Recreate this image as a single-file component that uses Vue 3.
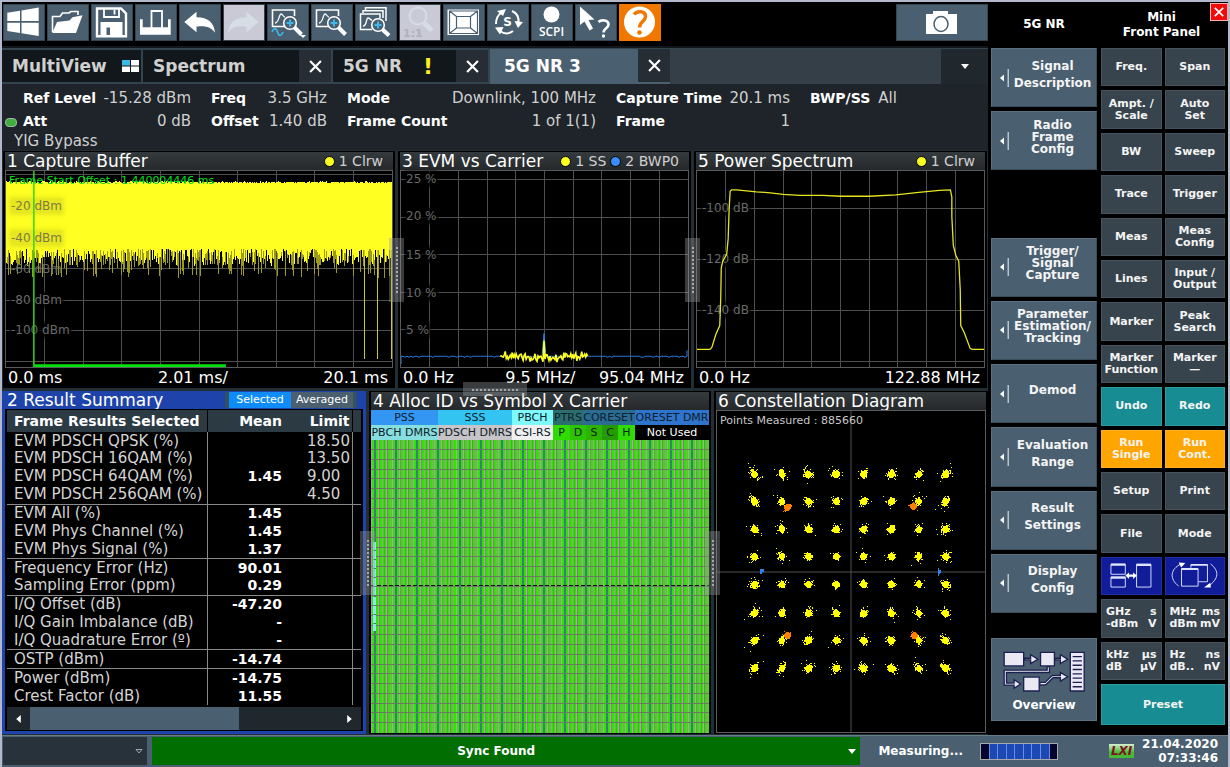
<script setup>
let seed = 7
function rnd() {
  seed = (seed * 16807) % 2147483647
  return seed / 2147483647
}
function gauss() {
  return rnd() + rnd() + rnd() + rnd() - 2
}

/* capture buffer: one pixel-wide column per sample bin */
let brightPath = ''
let dimPath = ''
for (let x = 0; x < 388; x++) {
  const top = rnd() < 0.12 ? 10 : rnd() < 0.3 ? 12 : 11
  const body = 79 + Math.round(rnd() * rnd() * 14)
  brightPath += `M${x} ${top}V${body}h1V${top}z`
  const r = rnd()
  if (r < 0.34) brightPath += `M${x} ${body}V${86 + Math.round(rnd() * 10)}h1V${body}z`
  else if (r < 0.62) dimPath += `M${x} ${body}V${86 + Math.round(rnd() * 11)}h1V${body}z`
  else if (r < 0.78) dimPath += `M${x} ${body}V${98 + Math.round(rnd() * 10)}h1V${body}z`
}

/* EVM trace */
let evmSs = 'M100 187'
for (let x = 101; x <= 188; x++) {
  const y = x === 144 ? 171 : 187.5 + gauss() * 4
  evmSs += `L${x} ${y.toFixed(1)}`
}
let evmBwp = 'M0 195V187'
for (let x = 2; x < 287; x += 2) {
  evmBwp += `L${x} ${x === 144 ? 164 : (187 + (rnd() < 0.12 ? 1 : 0))}`
}
evmBwp += 'L288 187V181'

/* constellation clouds */
function cloud(cx, cy, n, sx, sy, tilt) {
  let d = ''
  for (let i = 0; i < n; i++) {
    const k = i < n * 0.85 ? 1 : 1.8
    const a = gauss() * sx * k
    const b = gauss() * sy * k
    const x = Math.round(cx + a)
    const y = Math.round(cy + b + a * tilt)
    d += `M${x} ${y}h1v1h-1z`
  }
  const rx = Math.round(cx)
  const ry = Math.round(cy)
  return d + `M${rx - 2} ${ry - 2}h5v5h-5zM${rx - 3} ${ry - 1}h7v3h-7zM${rx - 1} ${ry - 3}h3v7h-3z`
}
let qam = ''
for (let i = 0; i < 8; i++) {
  for (let j = 0; j < 8; j++) {
    const dx = (i - 3.5) / 3.5
    const dy = (j - 3.5) / 3.5
    const s = 1 + 0.4 * Math.hypot(dx, dy)
    qam += cloud(37 + i * 27.6, 62.5 + j * 27.6, 90, 2.5 * s, 2.4 * s, dx * dy * 0.6)
  }
}
const pilots = cloud(71, 96, 80, 3.2, 1.8, -0.5) + cloud(197, 95, 80, 2.8, 2, 0.3) +
  cloud(71, 223, 80, 2.2, 2.4, 0) + cloud(198, 223, 80, 2.2, 2.4, 0)
const sync = 'M43 158h4v3h-2v2h-2zM223 157h1v2h1v4h-1v2h-1zM225 159h1v3h-1z'

/* resource grid columns */
const pattern = [
  [0, 1, '#b4a0ac'], [3, 2, '#3f7a7c'], [7, 1, '#b8a0b0'], [8, 1, '#6f9a58'], [11, 1, '#a8989c'],
  [13, 1, '#34c010'], [15, 1, '#b8a0b0'], [16, 1, '#6f8a60'], [19, 1, '#9c9c88']
]
const symbols = []
for (let k = 0; k < 16; k++) {
  for (const [dx, w, c] of pattern) symbols.push({ x: Math.round(k * 21.125) + dx, w, c })
}
const gridRows = Array.from({ length: 29 }, (_, i) => (i + 1) * 9.65)

const legendTop = [
  ['PSS', 67, 'c-pss'], ['SSS', 74, 'c-sss'], ['PBCH', 41, 'c-pbch'],
  ['PTRS', 30, 'c-ptrs'], ['CORESET', 52, 'c-core'], ['ORESET DMR', 74, 'c-cdmr']
]
const legendBottom = [
  ['PBCH DMRS', 67, 'c-pdm'], ['PDSCH DMRS', 74, 'c-gray'], ['CSI-RS', 41, 'c-csi'],
  ['P', 17, 'g1'], ['D', 16, 'g2'], ['S', 16, 'g3'], ['C', 16, 'g4'], ['H', 17, 'g1'], ['Not Used', 74, 'c-none']
]

const results = [
  ['EVM PDSCH QPSK (%)', '', '18.50'],
  ['EVM PDSCH 16QAM (%)', '', '13.50'],
  ['EVM PDSCH 64QAM (%)', '1.45', '9.00'],
  ['EVM PDSCH 256QAM (%)', '', '4.50', true],
  ['EVM All (%)', '1.45', ''],
  ['EVM Phys Channel (%)', '1.45', ''],
  ['EVM Phys Signal (%)', '1.37', '', true],
  ['Frequency Error (Hz)', '90.01', ''],
  ['Sampling Error (ppm)', '0.29', '', true],
  ['I/Q Offset (dB)', '-47.20', ''],
  ['I/Q Gain Imbalance (dB)', '-', ''],
  ['I/Q Quadrature Error (º)', '-', '', true],
  ['OSTP (dBm)', '-14.74', '', true],
  ['Power (dBm)', '-14.75', ''],
  ['Crest Factor (dB)', '11.55', '']
]

const softkeys = [
  ['Signal', 'Description'], ['Radio', 'Frame', 'Config'], null,
  ['Trigger/', 'Signal', 'Capture'], ['Parameter', 'Estimation/', 'Tracking'], ['Demod'],
  ['Evaluation', 'Range'], ['Result', 'Settings'], ['Display', 'Config']
]

const keyGroups = [
  { tone: '', keys: [['Freq.'], ['Span'], ['Ampt. /', 'Scale'], ['Auto', 'Set'], ['BW'], ['Sweep'], ['Trace'], ['Trigger'],
    ['Meas'], ['Meas', 'Config'], ['Lines'], ['Input /', 'Output'], ['Marker'], ['Peak', 'Search'], ['Marker', 'Function'], ['Marker', '—']] },
  { tone: 'teal', keys: [['Undo'], ['Redo']] },
  { tone: 'orange', keys: [['Run', 'Single'], ['Run', 'Cont.']] },
  { tone: '', keys: [['Setup'], ['Print'], ['File'], ['Mode']] }
]
const unitKeys = [
  ['GHz', 's', '-dBm', 'V'], ['MHz', 'ms', 'dBm', 'mV'],
  ['kHz', 'µs', 'dB', 'µV'], ['Hz', 'ns', 'dB..', 'nV']
]
const vLines = [1, 2, 3, 4, 5, 6, 7, 8, 9]
</script>

<template>
  <div class="app">
    <div class="upper">
      <main class="main">
        <div class="toolbar">
          <button class="tool" aria-label="Windows"><svg viewBox="0 0 42 37"><path fill="#fff" d="M4.3 8.7L17 6.7V17H4.3zM18.5 6.4L35.7 3.5V17H18.5zM4.3 18.7H17V29L4.3 27zM18.5 18.7H35.7V32L18.5 29.3z" /></svg></button>
          <button class="tool" aria-label="Open"><svg viewBox="0 0 42 37"><path fill="none" stroke="#fff" stroke-width="1.6" d="M5.5 28V12.5H13L15.5 9H22L24 7.5H31V11" /><path fill="#fff" d="M10 18L22.5 16.5L25.5 13.3L35.5 11.3L29 28.9H5.2z" /></svg></button>
          <button class="tool" aria-label="Save"><svg viewBox="0 0 42 37"><path fill="none" stroke="#fff" stroke-width="2.4" d="M6 4.5H30L35 9.5V32.3H6z" /><path fill="none" stroke="#fff" stroke-width="1.8" d="M13 4.5V13H28V4.5M23.5 6V10.5" /><path fill="#fff" d="M9.5 18H31.5V32H19V23.5H15.5V32H9.5z" /></svg></button>
          <button class="tool" aria-label="Print"><svg viewBox="0 0 42 37"><path fill="#fff" d="M5 15.3H7.7V23.3H33V15.3H35.7V30.7H5z" /><path fill="none" stroke="#fff" stroke-width="1.8" d="M16.5 24V7H27V24" /></svg></button>
          <button class="tool" aria-label="Undo"><svg viewBox="0 0 42 37"><path fill="#fff" d="M5.3 18L17.5 7.7V13.3C28 13 35 18 36 28.7C32 23 26 21.3 17.5 22.7V28.3z" /></svg></button>
          <button class="tool off" aria-label="Redo" disabled><svg viewBox="0 0 42 37"><path fill="#d6dde4" d="M35.7 18L23.5 7.7V13.3C13 13 6 18 5 28.7C9 23 15 21.3 23.5 22.7V28.3z" /></svg></button>
          <button class="tool" aria-label="Zoom trace"><svg viewBox="0 0 42 37"><path fill="none" stroke="#fff" stroke-width="1.6" d="M18 22.5H5.5V6H27.5V12" /><path fill="none" stroke="#fff" stroke-width="1.3" d="M8 19C12 19 12 10 14 10S16 13 18 13" /><path stroke="#fff" stroke-width="4" d="M27 23L34.5 30.5" /><circle cx="23" cy="19" r="6.3" fill="#4a5f70" stroke="#fff" stroke-width="1.6" /><path stroke="#3bb8e8" stroke-width="2" d="M23 15.5V22.5M19.5 19H26.5" /><path fill="none" stroke="#3bb8e8" stroke-width="1.6" d="M5 28C7 23.5 9 23.5 10.5 28S14 32.5 16 28" /><path fill="#fff" d="M33 31H39L36 34z" /></svg></button>
          <button class="tool" aria-label="Zoom"><svg viewBox="0 0 42 37"><path fill="none" stroke="#fff" stroke-width="1.6" d="M18 22.5H5.5V6H27.5V12" /><path fill="none" stroke="#fff" stroke-width="1.3" d="M8 19C12 19 12 10 14 10S16 13 18 13" /><path stroke="#fff" stroke-width="4" d="M27 23L34.5 30.5" /><circle cx="23" cy="19" r="6.3" fill="#4a5f70" stroke="#fff" stroke-width="1.6" /><path stroke="#3bb8e8" stroke-width="2" d="M23 15.5V22.5M19.5 19H26.5" /></svg></button>
          <button class="tool" aria-label="Multi zoom"><svg viewBox="0 0 42 37"><path fill="none" stroke="#fff" stroke-width="1.5" d="M17 25.5H5.5V10H25V14M8 9V6.8H28V14M10.5 6V3.8H31V17" /><path fill="none" stroke="#fff" stroke-width="1.3" d="M8 22C12 22 11 14 13 14S15 16 17 16" /><path stroke="#fff" stroke-width="4" d="M27 25L34 31.5" /><circle cx="23" cy="21" r="6.3" fill="#4a5f70" stroke="#fff" stroke-width="1.6" /><path stroke="#3bb8e8" stroke-width="2" d="M23 17.5V24.5M19.5 21H26.5" /></svg></button>
          <button class="tool off" aria-label="Zoom off" disabled><svg viewBox="0 0 42 37"><path stroke="#d6dde4" stroke-width="5" d="M25 19L33 26.5" /><circle cx="19" cy="12" r="8.5" fill="none" stroke="#d6dde4" stroke-width="2" /><text x="4" y="33" font-size="11" font-weight="bold" fill="#aeb2ba">1:1</text></svg></button>
          <button class="tool" aria-label="Display frame"><svg viewBox="0 0 42 37"><path fill="#fff" d="M4.5 5.5H36V31H4.5z" /><path fill="none" stroke="#4a5f70" stroke-width="1.2" d="M13.5 12.5H27.5V24H13.5zM6.5 7L13.5 12.5M34.5 7L27.5 12.5M6.5 29.5L13.5 24M34.5 29.5L27.5 24M6.5 7H34.5V29.5H6.5z" /></svg></button>
          <button class="tool" aria-label="Sequencer"><svg viewBox="0 0 42 37"><g fill="none" stroke="#fff" stroke-width="2"><path d="M9 20C9 15 11 11 14 9" /><path d="M25 7C30 9 32 14 31.5 19" /><path d="M26 27C22 30 17 30 13 27" /></g><path fill="#fff" d="M10 7L19 5L16 12zM27.5 17L36 18L31 24zM8 23.5L16.5 23L13 30.5z" /><text x="20.5" y="22" text-anchor="middle" font-size="12" font-weight="bold" fill="#fff">S</text></svg></button>
          <button class="tool" aria-label="SCPI recorder"><svg viewBox="0 0 42 37"><circle cx="20.5" cy="10.5" r="8" fill="#fff" /><text class="scpi" x="20.5" y="32" text-anchor="middle" fill="#fff">SCPI</text></svg></button>
          <button class="tool" aria-label="Context help"><svg viewBox="0 0 42 37"><path fill="#fff" d="M5 2.5V21L9.5 17.5L14.5 26.5L18 24.5L13.5 16L19.5 15.5z" /><path fill="none" stroke="#fff" stroke-width="2.6" d="M23.5 18C26 15.5 33.5 15.5 33.5 20.5C33.5 24 28.5 24.5 28.5 28.5" /><circle cx="28.5" cy="32" r="1.7" fill="#fff" /></svg></button>
          <button class="tool help" aria-label="Help"><svg viewBox="0 0 42 37"><circle cx="20.5" cy="18" r="15.5" fill="#fff" /><path fill="none" stroke="#f07800" stroke-width="3.4" d="M15 10.5C18 6.5 26.5 6.5 26.5 12.5C26.5 17.5 20.5 17.5 20.5 23.5" /><circle cx="20.5" cy="28.5" r="2.3" fill="#f07800" /></svg></button>
          <button class="tool camera" aria-label="Screenshot"><svg viewBox="0 0 42 37"><path fill="#fff" d="M5 10H12V7H27V10H36V30H5z" /><ellipse cx="20" cy="20" rx="7" ry="7.5" fill="none" stroke="#4a5f70" stroke-width="1.5" /></svg></button>
        </div>

        <nav class="tabs">
          <div class="tab t-multi"><button class="tab-name">MultiView</button>
            <svg class="multi" viewBox="0 0 17 12"><path fill="#3bb8e8" d="M0 0H8V5.5H0z" /><path fill="#fff" d="M9 0H17V5.5H9zM0 6.5H8V12H0zM9 6.5H17V12H9z" /></svg></div>
          <div class="tab t-spec"><button class="tab-name">Spectrum</button><button class="x" aria-label="Close Spectrum"><svg viewBox="0 0 12 12"><path d="M1 1L11 11M11 1L1 11" /></svg></button></div>
          <div class="tab t-nr"><button class="tab-name">5G NR</button><span class="warn">!</span><button class="x" aria-label="Close 5G NR"><svg viewBox="0 0 12 12"><path d="M1 1L11 11M11 1L1 11" /></svg></button></div>
          <div class="tab t-nr3 active"><button class="tab-name">5G NR 3</button><button class="x" aria-label="Close 5G NR 3"><svg viewBox="0 0 12 12"><path d="M1 1L11 11M11 1L1 11" /></svg></button></div>
          <div class="filler"></div>
          <button class="more" aria-label="More tabs"><svg viewBox="0 0 8 5"><path fill="#fff" d="M0 0H8L4 5z" /></svg></button>
        </nav>

        <section class="info">
          <div class="info-grid">
            <div><b>Ref Level</b><span>-15.28 dBm</span></div>
            <div><b>Freq</b><span>3.5 GHz</span></div>
            <div><b>Mode</b><span>Downlink, 100 MHz</span></div>
            <div><b>Capture Time</b><span>20.1 ms</span></div>
            <div class="near"><b>BWP/SS</b><span>All</span></div>
            <div class="led"><b>Att</b><span>0 dB</span></div>
            <div><b>Offset</b><span>1.40 dB</span></div>
            <div><b>Frame Count</b><span>1 of 1(1)</span></div>
            <div><b>Frame</b><span>1</span></div>
          </div>
          <div class="yig">YIG Bypass</div>
        </section>

        <div class="row row-a">
          <section class="panel">
            <header><h2>1 Capture Buffer</h2><span class="trace"><i class="dot"></i>1 Clrw</span></header>
            <div class="plot">
              <svg viewBox="0 0 388 198" preserveAspectRatio="none" shape-rendering="crispEdges">
                <path v-for="n in vLines" :key="n" class="grid" :d="`M${n * 38.8} 0V198`" />
                <path class="grid" d="M0 4H388M0 98.5H388M0 130.5H388M0 160.5H388M0 192.5H388" />
                <path fill="#9c9a1c" :d="dimPath" /><path fill="#ffff22" :d="brightPath" />
                <path stroke="#cccc20" stroke-width="1" d="M360.5 80V190M373.5 80V190M387 80V190" />
              </svg>
              <span class="ax on1 y20">-20 dBm</span><span class="ax on1 y40">-40 dBm</span>
              <span class="ax y60">-60 dBm</span><span class="ax y80">-80 dBm</span><span class="ax y100">-100 dBm</span>
              <svg viewBox="0 0 388 198" preserveAspectRatio="none">
                <path stroke="#30d818" stroke-width="1.5" d="M28 0V198" /><path stroke="#00e010" stroke-width="3" d="M28 196.5H221" />
              </svg>
              <span class="offset">Frame Start Offset : 1.440004446 ms</span>
            </div>
            <footer><span>0.0 ms</span><span>2.01 ms/</span><span>20.1 ms</span></footer>
            <i class="split v"></i>
          </section>
          <section class="panel">
            <header><h2>3 EVM vs Carrier</h2><span class="trace"><i class="dot"></i>1 SS<i class="dot blue"></i>2 BWP0</span></header>
            <div class="plot">
              <svg viewBox="0 0 289 198" preserveAspectRatio="none" shape-rendering="crispEdges">
                <path v-for="n in vLines" :key="n" class="grid" :d="`M${n * 28.9} 0V198`" />
                <path class="grid" d="M0 8.5H289M0 46.5H289M0 84.5H289M0 122.5H289M0 160H289" />
              </svg>
              <span class="ax p25">25 %</span><span class="ax p20">20 %</span><span class="ax p15">15 %</span><span class="ax p10">10 %</span><span class="ax p5">5 %</span>
              <svg viewBox="0 0 289 198" preserveAspectRatio="none">
                <path fill="none" stroke="#2f80f0" :d="evmBwp" /><path fill="none" stroke="#ffff22" stroke-width="1.6" :d="evmSs" />
              </svg>
            </div>
            <footer><span>0.0 Hz</span><span class="push">9.5 MHz/</span><span>95.04 MHz</span></footer>
            <i class="split v"></i><i class="split h"></i>
          </section>
          <section class="panel">
            <header><h2>5 Power Spectrum</h2><span class="trace"><i class="dot"></i>1 Clrw</span></header>
            <div class="plot">
              <svg viewBox="0 0 290 198" preserveAspectRatio="none" shape-rendering="crispEdges">
                <path v-for="n in vLines" :key="n" class="grid" :d="`M${n * 29} 0V198`" />
                <path class="grid" d="M0 37.5H290M0 89H290M0 140.5H290M0 192.5H290" />
              </svg>
              <span class="ax d100">-100 dB</span><span class="ax d120">-120 dB</span><span class="ax d140">-140 dB</span>
              <svg viewBox="0 0 290 198" preserveAspectRatio="none">
                <path fill="none" stroke="#e6e620" stroke-width="1.3" d="M0 180H13L15 178L19 165L23 156L24 128L24.5 98L26 91L30 84L31.5 68L32.5 38L33.5 20.5L35 19H40L60 21L74 22L87 23.5L104 24.5H127L145 25.5H174L201 24L224 21.5L245 19.5L256 19L257.5 26V46L259 75L261.5 85L264.5 91L266 120L266.5 156L270 163L276 179L278 180H290" />
              </svg>
            </div>
            <footer><span>0.0 Hz</span><span>122.88 MHz</span></footer>
          </section>
        </div>

        <div class="row row-b">
          <section class="panel summary">
            <header><h2>2 Result Summary</h2><span class="modes"><button class="sel">Selected</button><button>Averaged</button></span></header>
            <div class="sum-body">
              <table>
                <thead><tr><th>Frame Results Selected</th><th>Mean</th><th>Limit</th><th></th></tr></thead>
                <tbody>
                  <tr v-for="r in results" :key="r[0]" :class="{ rule: r[3] }"><td>{{ r[0] }}</td><td>{{ r[1] }}</td><td>{{ r[2] }}</td><td></td></tr>
                </tbody>
              </table>
              <div class="scroll">
                <button aria-label="Scroll left"><svg viewBox="0 0 4 7"><path fill="#fff" d="M4 0V7L0 3.5z" /></svg></button>
                <div class="track"><div class="thumb"></div></div>
                <button aria-label="Scroll right"><svg viewBox="0 0 4 7"><path fill="#fff" d="M0 0V7L4 3.5z" /></svg></button>
              </div>
            </div>
            <i class="split v"></i>
          </section>
          <section class="panel">
            <header><h2>4 Alloc ID vs Symbol X Carrier</h2></header>
            <div class="legend"><span v-for="l in legendTop" :key="l[0]" :class="l[2]" :style="{ flexGrow: l[1] }">{{ l[0] }}</span></div>
            <div class="legend"><span v-for="l in legendBottom" :key="l[0]" :class="l[2]" :style="{ flexGrow: l[1] }">{{ l[0] }}</span></div>
            <div class="plot alloc">
              <svg viewBox="0 0 338 290" preserveAspectRatio="none" shape-rendering="crispEdges">
                <path fill="#2ce600" d="M0 0H338V290H0z" />
                <rect v-for="(s, i) in symbols" :key="i" :x="s.x" y="0" :width="s.w" height="290" :fill="s.c" />
                <path v-for="y in gridRows" :key="y" stroke="#687a62" stroke-width="1" :d="`M0 ${y}H338`" />
                <path stroke="#111" stroke-width="1" stroke-dasharray="4 2" d="M0 144.5H338" />
                <path stroke="#8ce8ee" stroke-width="3" stroke-dasharray="8 1" d="M3 101V189" />
              </svg>
            </div>
            <i class="split v"></i>
          </section>
          <section class="panel">
            <header><h2>6 Constellation Diagram</h2></header>
            <div class="plot iq">
              <svg viewBox="0 0 270 320" preserveAspectRatio="none" shape-rendering="crispEdges">
                <path class="grid" d="M135 0V320M0 160.5H270" />
                <path fill="#ffff00" :d="qam" /><path fill="#ff8000" :d="pilots" /><path fill="#2f80f0" :d="sync" />
              </svg>
              <span class="points">Points Measured : 885660</span>
            </div>
          </section>
        </div>
      </main>

      <aside class="soft">
        <div class="soft-title">5G NR</div>
        <div class="soft-list">
          <template v-for="(k, i) in softkeys" :key="i">
            <button v-if="k" class="softkey">
              <svg viewBox="0 0 9 18"><path fill="#fff" d="M4 5.5V12.5L0 9z" /><path fill="#b8c4cc" d="M7.5 0H9V18H7.5z" /></svg>
              <span :class="{ tight: k.length > 2 }"><template v-for="(t, j) in k" :key="j"><br v-if="j">{{ t }}</template></span>
            </button>
            <div v-else></div>
          </template>
        </div>
        <button class="overview">
          <svg viewBox="50 508 260 130"><g fill="#eae8f2" stroke="#1c2050" stroke-width="4">
            <path d="M58 515H117V556H58zM168 515H210V556H168zM258 515H300V632H258zM117 590H164V632H117z" />
            <path d="M120 533H138V522L160 536L138 549V538H120zM212 533H228V522L250 536L228 549V538H212zM188 558V569H58V614H88V624L108 611L88 598V608H65V576H195V558zM166 614L184 613L206 592H228V602L250 589L228 576V585H203L182 606H166z" /></g>
            <path stroke="#1c2050" stroke-width="4" d="M265 528H293M265 541H293M265 554H293M265 567H293M265 580H293M265 593H293M265 606H293M265 619H293" />
          </svg>
          Overview
        </button>
      </aside>

      <aside class="mini">
        <div class="mini-title">Mini<br>Front Panel</div>
        <button class="shut" aria-label="Close panel"><svg viewBox="0 0 12 12"><path d="M1 1L11 11M11 1L1 11" /></svg></button>
        <div class="keypad">
          <div v-for="(g, i) in keyGroups" :key="i" class="keys" :class="g.tone">
            <button v-for="(k, j) in g.keys" :key="j"><span v-for="t in k" :key="t">{{ t }}</span></button>
          </div>
          <div class="keys blue-keys">
            <button aria-label="Split display"><svg viewBox="349 229 182 112"><g fill="none" stroke="#dfe3ff" stroke-width="3"><path d="M375 249H421V281H375zM375 290H421V322H375zM457 249H503V322H457z" /><path stroke-width="7" d="M375 250H421M375 292H421M457 251H503" /></g><path fill="#fff" d="M421 285L433 275V282H446V275L458 285L446 296V289H433V296z" /></svg></button>
            <button aria-label="Toggle windows"><svg viewBox="540 229 182 112"><g fill="none" stroke="#dfe3ff" stroke-width="3"><path d="M617 260V250H670V305H641" /><path fill="#101c98" d="M587 263H640V319H587z" /><path stroke-width="6" d="M617 251H670M587 264H640" /><path d="M578 319C548 296 550 265 586 248M680 248C708 270 708 295 672 320" /></g><path fill="#fff" d="M578 243L599 245L586 259zM679 308L681 323L659 323z" /></svg></button>
          </div>
          <div class="keys units">
            <button v-for="u in unitKeys" :key="u[0]"><span><i>{{ u[0] }}</i><i>{{ u[1] }}</i></span><span><i>{{ u[2] }}</i><i>{{ u[3] }}</i></span></button>
          </div>
        </div>
        <button class="preset">Preset</button>
      </aside>
    </div>

    <footer class="status">
      <button class="drop" aria-label="Messages"><svg viewBox="0 0 8 5"><path fill="none" stroke="#9aa6ae" d="M1 .5H7L4 4z" /></svg></button>
      <button class="sync"><span>Sync Found</span><svg viewBox="0 0 8 5"><path fill="#fff" d="M0 0H8L4 5z" /></svg></button>
      <span class="meas">Measuring...</span>
      <span class="bar"><i v-for="n in 9" :key="n"></i></span>
      <span class="lxi">LXI</span>
      <time>21.04.2020<br>07:33:46</time>
    </footer>
  </div>
</template>

<style>
body { background: #000; }
</style>

<style scoped>
* { box-sizing: border-box; }
.app {
  min-height: 100vh; display: flex; flex-direction: column;
  font-family: "DejaVu Sans", Verdana, sans-serif; color: #fff; background: #000;
  border: 2px solid #b4b8cc; border-bottom: 0;
}
button { font: inherit; color: inherit; border: 0; padding: 0; margin: 0; background: none; }
svg { display: block; }
i { font-style: normal; }
.upper { flex: 1; display: grid; grid-template-columns: 1fr 110px 130px; min-height: 0; }
.main { display: flex; flex-direction: column; background: #1e262c; min-width: 0; }

.toolbar { height: 44px; flex: none; display: flex; gap: 2px; padding: 2px 0 5px 1px; background: #000; }
.tool { width: 42px; background: #4a5f70; border: 1px solid #36444f; display: flex; justify-content: center; }
.tool svg { width: 42px; height: 37px; flex: none; margin: -1px; overflow: visible; }
.tool.off { background: #c9cad6; }
.tool.help { background: #f07800; border-color: #f07800; }
.camera { width: 92px; margin-left: auto; }
.scpi { font: 600 12px "Open Sans", sans-serif; }

.tabs { height: 38px; flex: none; display: flex; gap: 2px; border-top: 2px solid #10161a; background: #34444f; padding-top: 1px; }
.tab { display: flex; align-items: center; background: #11171a; margin: 1px 0 2px; font-size: 17px; font-weight: bold; color: #d0d0d0; }
.tab-name { flex: 1; text-align: left; padding-left: 10px; font-weight: bold; }
.t-multi { width: 139px; }
.t-spec { width: 188px; }
.t-nr { width: 155px; }
.t-nr3 { width: 180px; }
.tab.active { background: #4a5f70; color: #fff; margin: 0; padding-bottom: 2px; }
.tab.active .tab-name { padding-left: 14px; }
.x { width: 32px; align-self: stretch; background: #262d34; display: grid; place-items: center; }
.x svg { width: 13px; height: 13px; }
.x path, .shut path { stroke: #fff; stroke-width: 2; fill: none; }
.multi { width: 17px; height: 12px; margin-right: 2px; }
.warn { color: #ffee22; font-size: 22px; margin-right: 23px; }
.filler { flex: 1; margin-left: -2px; background: #343f47; }
.more { width: 47px; margin-left: -2px; background: #20272d; display: grid; place-items: center; }
.more svg { width: 8px; height: 5px; }

.info { height: 66px; flex: none; position: relative; background: #1e242a; font-size: 15px; padding: 3px 0 0 21px; }
.info-grid { display: grid; grid-template-columns: 168fr 116fr 249fr 174fr 178fr; gap: 0 20px; line-height: 23px; }
.info-grid div { display: flex; justify-content: space-between; white-space: nowrap; color: #d0d0d0; }
.info-grid b { font-size: 14px; color: #fff; }
.info-grid .near { justify-content: flex-start; gap: 8px; }
.led { position: relative; }
.led::before { content: ""; position: absolute; left: -18px; top: 8px; width: 10px; height: 7px; border-radius: 4px; background: #3fae3f; border: 1px solid #9fb89f; }
.yig { line-height: 17px; margin-left: -9px; color: #d0d0d0; font-size: 15px; }

.row { display: grid; gap: 3px; background: #222d34; padding: 1px; min-height: 0; }
.row-a { flex: 238 1 0; grid-template-columns: 392fr 293fr 293fr; padding-bottom: 2px; }
.row-b { flex: 344 1 0; grid-template-columns: 364fr 342fr 274fr; padding-left: 0; padding-right: 0; }
.panel { position: relative; display: flex; flex-direction: column; background: #000; padding: 1px 2px; min-width: 0; min-height: 0; }
.panel header { height: 18px; flex: none; display: flex; align-items: center; justify-content: space-between; background: linear-gradient(#343a3d, #26292b); padding: 0 10px 0 2px; }
h2 { margin: 0; font-size: 17px; font-weight: normal; line-height: 18px; white-space: nowrap; }
.trace { display: flex; align-items: center; font-size: 14px; color: #d0d0d0; gap: 4px; white-space: nowrap; }
.dot { width: 11px; height: 11px; border-radius: 50%; background: #ffff22; border: 1px solid #000; }
.dot.blue { background: #3b8cf8; }
.plot { flex: 1; position: relative; border: 1px solid #5a5a5a; min-height: 0; }
.plot svg { position: absolute; inset: 0; width: 100%; height: 100%; }
.grid { stroke: #505050; stroke-width: 1; fill: none; }
.ax { position: absolute; left: 5px; transform: translateY(-50%); font-size: 12px; line-height: 14px; color: #6a6a6a; background: rgba(0, 0, 0, .8); box-shadow: 0 0 3px 1px rgba(0, 0, 0, .8); }
.ax.on1 { color: #7c7c40; background: rgba(160, 160, 30, .25); box-shadow: 0 0 4px 2px rgba(160, 160, 30, .25); }
.y20 { top: 18%; }
.y40 { top: 34%; }
.y60 { top: 50%; background: none; box-shadow: none; }
.y80 { top: 66%; }
.y100 { top: 81%; }
.p25 { top: 4%; }
.p20 { top: 23%; }
.p15 { top: 43%; }
.p10 { top: 62%; }
.p5 { top: 81%; }
.d100 { top: 19%; }
.d120 { top: 45%; }
.d140 { top: 71%; }
.offset { position: absolute; left: 3px; top: 3px; font-size: 11px; line-height: 14px; color: #00e020; white-space: nowrap; }
.panel footer { height: 19px; flex: none; display: flex; justify-content: space-between; padding: 0 5px 0 3px; font-size: 16px; line-height: 19px; white-space: nowrap; }
.push { margin-left: 28px; }
.split { position: absolute; z-index: 2; background: rgba(150, 155, 158, .38); }
.split.v { width: 15px; height: 64px; right: -9px; top: 50%; transform: translateY(-50%); }
.split.v::after { content: ""; position: absolute; left: 7px; top: 9px; bottom: 9px; border-left: 2px dotted #a8a8a8; }
.split.h { height: 14px; width: 64px; left: 65px; bottom: -8px; }
.split.h::after { content: ""; position: absolute; top: 7px; left: 9px; right: 9px; border-top: 2px dotted #a8a8a8; }

.summary { background: #1e44ac; padding: 0 3px 3px; }
.summary header { background: none; padding: 0 6px 0 2px; }
.modes { display: flex; font-size: 11px; line-height: 16px; border: 0 solid #35505e; border-width: 0 4px; }
.modes button { width: 62px; background: #4a5f70; white-space: nowrap; }
.modes .sel { background: #0f8cf8; }
.sum-body { flex: 1; background: #000; padding: 1px 2px; display: flex; flex-direction: column; gap: 2px; }
table { flex: 1; width: 100%; border-collapse: collapse; table-layout: fixed; }
th { background: #2c3a44; font-size: 14px; line-height: 22px; padding: 0; white-space: nowrap; text-align: left; }
td { font-size: 15px; line-height: 17px; padding: 0; white-space: nowrap; color: #d4d4d4; }
th:first-child, td:first-child { width: 200px; padding-left: 7px; border-right: 1px solid #8a8a8a; }
th:nth-child(2), td:nth-child(2) { width: 90px; text-align: right; padding-right: 15px; }
td:nth-child(2) { font-weight: bold; font-size: 14px; color: #fff; }
th:nth-child(3), td:nth-child(3) { padding-left: 10px; border-right: 1px solid #8a8a8a; }
th:nth-child(3) { padding-right: 2px; text-align: right; }
th:nth-child(4) { width: 9px; }
th { border-color: #000 !important; }
.rule td { border-bottom: 1px solid #8a8a8a; }
.scroll { height: 23px; flex: none; display: flex; background: #20272d; }
.scroll button { width: 23px; display: grid; place-items: center; }
.scroll svg { width: 5px; height: 8px; }
.track { flex: 1; display: flex; }
.thumb { width: 68%; background: #4a5f70; }

.legend { display: flex; height: 15px; flex: none; }
.legend span { flex: 1 1 0; min-width: 0; overflow: hidden; display: flex; justify-content: center; white-space: nowrap; font-size: 11px; line-height: 15px; color: #10202c; }
.c-pss { background: #3396f2; }
.c-sss { background: #34c4f2; }
.c-pbch { background: #7efafa; }
.c-ptrs { background: #2c6e6e; }
.c-core { background: #2a6c92; }
.c-cdmr { background: #2f74cc; }
.c-pdm { background: #86dede; }
.c-gray { background: #c6c4c6; }
.c-csi { background: #f0f0f0; }
.g1 { background: #30dc00; }
.g2 { background: #2cc400; }
.g3 { background: #2cb400; }
.g4 { background: #249c00; }
.legend .c-none { background: #000; color: #fff; }
.plot.alloc { border: 0; }
.points { position: absolute; left: 3px; top: 3px; font-size: 11px; line-height: 14px; color: #c8c8c8; }

.soft { display: flex; flex-direction: column; padding: 0 1px 14px 3px; background: #000; font-size: 12px; font-weight: bold; }
.soft-title { height: 46px; line-height: 44px; text-align: center; }
.soft-list { flex: 566 1 0; display: grid; grid-template-rows: repeat(9, 1fr); gap: 4px; }
.softkey { display: flex; align-items: center; background: #4a5f70; border: 1px solid #58708a; border-color: #5a6f80 #3c4d5a #3c4d5a #5a6f80; padding-left: 8px; color: #f4f4f4; }
.softkey svg { width: 9px; height: 18px; flex: none; }
.softkey span { flex: 1; text-align: center; line-height: 17px; padding-bottom: 6px; white-space: nowrap; }
.softkey .tight { line-height: 12px; padding-bottom: 8px; }
.overview { height: 83px; flex: none; margin-top: 25px; background: #4a5f70; border: 1px solid #5a6f80; padding-bottom: 3px; }
.overview svg { width: 87px; height: 43px; margin: 5px auto 5px; }

.mini { position: relative; display: flex; flex-direction: column; gap: 4px; padding: 0 3px 10px 3px; background: #000; font-size: 11px; font-weight: bold; }
.mini-title { height: 42px; padding: 8px 3px 0 0; font-size: 12px; line-height: 15px; text-align: center; flex: none; }
.shut { position: absolute; right: 0; top: 1px; width: 18px; height: 18px; background: #f00c0c; border: 1px solid #ffb0b0; display: grid; place-items: center; }
.shut svg { width: 10px; height: 10px; }
.keypad { flex: 1; display: grid; grid-template-columns: 1fr 1fr; grid-auto-rows: 1fr; gap: 4px 3px; }
.keys { display: contents; }
.keys button, .preset { background: #38444d; border: 1px solid #46545e; line-height: 12px; color: #f4f4f4; }
.keys span { display: block; }
.keys.teal button, .preset { background: #178c92; border-color: #2a9ca2; }
.keys.orange button { background: #ffa500; border-color: #ffb020; }
.blue-keys button { background: #101c98; border-color: #2030a8; }
.blue-keys svg { width: 100%; height: 35px; }
.units button { padding: 0 4px; }
.units span { display: flex; justify-content: space-between; }
.preset { height: 41px; flex: none; }

.status { height: 32px; flex: none; display: flex; align-items: center; background: #4a5f70; font-size: 12px; font-weight: bold; padding: 0 10px 1px 1px; border-top: 1px solid #667a88; }
.drop { width: 144px; height: 28px; background: #27323a; display: flex; align-items: center; justify-content: flex-end; padding-right: 4px; }
.drop svg, .sync svg { width: 8px; height: 5px; }
.sync { flex: 1; height: 28px; margin-left: 5px; background: #006e00; display: flex; align-items: center; padding-right: 4px; }
.sync span { flex: 1; text-align: center; padding-right: 8px; }
.meas { margin: 0 17px 0 18px; }
.bar { display: flex; gap: 1px; width: 78px; height: 17px; border: 1px solid #a8a8a8; background: #6a8ce8; }
.bar i { flex: 1; background: #1c48b4; }
.bar i:first-child, .bar i:last-child { background: #04042c; }
.lxi { margin: 0 8px 0 51px; width: 25px; height: 14px; background: linear-gradient(#d8f0d0, #48b838 60%); color: #7c1420; font: italic bold 12px/14px "DejaVu Sans", sans-serif; text-align: center; }
time { line-height: 14px; text-align: right; }
</style>
